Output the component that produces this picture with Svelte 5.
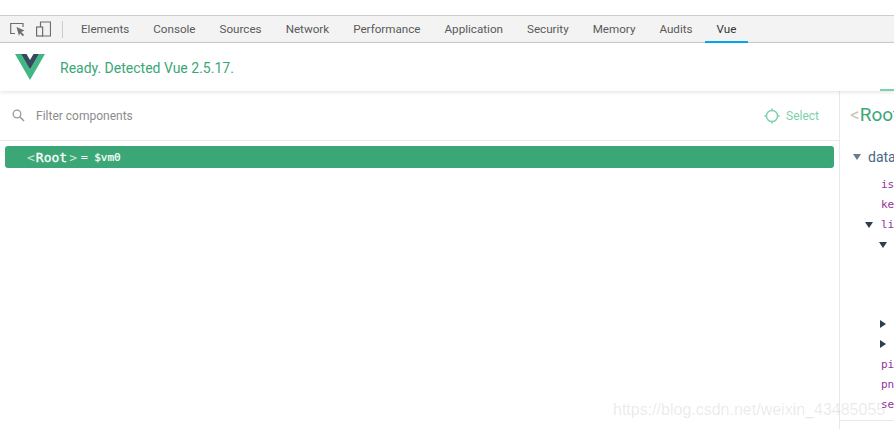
<script>
	const tabs = ['Elements', 'Console', 'Sources', 'Network', 'Performance', 'Application', 'Security', 'Memory', 'Audits', 'Vue'];
	const props = [
		{ name: 'is', indent: 0 },
		{ name: 'ke', indent: 0 },
		{ name: 'li', indent: 0, arrow: 'down' },
		{ name: '', indent: 1, arrow: 'down' },
		{ name: '', indent: 1 },
		{ name: '', indent: 1 },
		{ name: '', indent: 1 },
		{ name: '', indent: 1, arrow: 'right' },
		{ name: '', indent: 1, arrow: 'right' },
		{ name: 'pi', indent: 0 },
		{ name: 'pn', indent: 0 },
		{ name: 'se', indent: 0 }
	];
</script>

<div class="page">
	<div class="devtools-bar">
		<svg class="tool" width="15" height="15" viewBox="0 0 15 15">
			<path d="M13 5V1.500H0.700v10H5" fill="none" stroke="#6e6e6e" stroke-width="1.2" />
			<path d="M6.500 5l8 3.600-3.200 1.300 2.800 3-1.300 1.300-2.800-3-1 2.800z" fill="#6e6e6e" />
		</svg>
		<svg class="tool device" width="15" height="16" viewBox="0 0 15 16">
			<path d="M4.500 6V1h10v14H6" fill="none" stroke="#6e6e6e" stroke-width="1.2" />
			<rect x="0.600" y="6" width="6" height="9" fill="none" stroke="#6e6e6e" stroke-width="1.2" />
		</svg>
		<span class="divider"></span>
		<nav class="tabs">
			{#each tabs as tab}
				<span class="tab" class:active={tab === 'Vue'}>{tab}</span>
			{/each}
		</nav>
	</div>

	<header class="app-header">
		<svg class="logo" width="30" height="26" viewBox="0 0 30 26">
			<path d="M0 0h6l9 15.500L24 0h6L15 26z" fill="#41b883" />
			<path d="M6 0h5.500L15 6l3.500-6H24l-9 15.500z" fill="#34495e" />
		</svg>
		<span class="ready">Ready. Detected Vue 2.5.17.</span>
		<span class="header-tab"></span>
	</header>

	<div class="split">
		<section class="left">
			<div class="filter">
				<svg class="search" width="13" height="13" viewBox="0 0 13 13">
					<circle cx="5" cy="5" r="3.800" fill="none" stroke="#999" stroke-width="1.300" />
					<path d="M8 8l4 4" stroke="#999" stroke-width="1.600" />
				</svg>
				<span class="placeholder">Filter components</span>
				<span class="select">
					<svg width="16" height="16" viewBox="0 0 16 16">
						<circle cx="8" cy="8" r="5.600" fill="none" stroke="#7dd0aa" stroke-width="1.500" />
						<path d="M8 0.500v2.500M8 13v2.500M0.500 8H3M13 8h2.500" stroke="#7dd0aa" stroke-width="1.500" />
					</svg>
					Select
				</span>
			</div>
			<div class="tree">
				<div class="row">
					<span class="bracket">&lt;</span><span class="root">Root</span><span class="bracket">&gt;</span>
					<span class="vm">= $vm0</span>
				</div>
			</div>
		</section>

		<section class="right">
			<div class="inspect-title"><span class="bracket-grey">&lt;</span>Root</div>
			<div class="data-head"><span class="caret"></span>data</div>
			<div class="props">
				{#each props as prop}
					<div class="prop" class:nested={prop.indent === 1}>
						{#if prop.arrow}<span class="arrow {prop.arrow}"></span>{/if}
						<span class="key">{prop.name}</span>
					</div>
				{/each}
			</div>
			<div class="bottom-line"></div>
		</section>
	</div>

	<span class="watermark">https://blog.csdn.net/weixin_43485055</span>
</div>

<style>
	:global(body) {
		margin: 0;
		background: #fff;
	}

	.page {
		position: relative;
		width: 894px;
		height: 429px;
		overflow: hidden;
		padding-top: 15px;
		box-sizing: border-box;
		font-family: Roboto, sans-serif;
	}

	.devtools-bar {
		display: flex;
		align-items: center;
		height: 28px;
		box-sizing: border-box;
		background: #f3f3f3;
		border-top: 1px solid #cdcdcd;
		border-bottom: 1px solid #cdcdcd;
		padding-left: 10px;
	}

	.device {
		margin-left: 11px;
	}

	.divider {
		width: 1px;
		height: 17px;
		background: #ccc;
		margin: 0 6px 0 11px;
	}

	.tabs {
		display: flex;
		height: 100%;
	}

	.tab {
		padding: 0 12px;
		font-size: 11.650px;
		line-height: 27px;
		color: #5a5a5a;
		box-sizing: border-box;
		height: 27px;
	}

	.tab.active {
		color: #333;
		border-bottom: 2px solid #03a9f4;
	}

	.app-header {
		position: relative;
		display: flex;
		align-items: center;
		height: 48px;
		box-sizing: border-box;
		padding: 2px 0 0 15px;
		box-shadow: 0 1px 4px rgba(0, 0, 0, 0.12);
	}

	.logo {
		margin-bottom: 2px;
	}

	.ready {
		margin-left: 15px;
		font-size: 14px;
		color: #3ba776;
	}

	.header-tab {
		position: absolute;
		right: 0;
		bottom: 0;
		width: 14px;
		height: 2px;
		background: #7dd0aa;
	}

	.split {
		display: flex;
		height: 338px;
	}

	.left {
		width: 839px;
		flex: none;
		border-right: 1px solid #e8e8e8;
	}

	.filter {
		display: flex;
		align-items: center;
		height: 50px;
		box-sizing: border-box;
		border-bottom: 1px solid #e8e8e8;
		padding: 0 20px 0 12px;
	}

	.placeholder {
		margin-left: 11px;
		font-size: 12px;
		color: #8c8c8c;
	}

	.select {
		margin-left: auto;
		display: flex;
		align-items: center;
		gap: 6px;
		font-size: 12px;
		color: #7dd0aa;
	}

	.tree {
		padding: 5px 5px 0;
	}

	.row {
		display: flex;
		align-items: center;
		height: 22px;
		padding-left: 22px;
		border-radius: 3px;
		background: #3ba776;
		color: #fff;
		font-family: "DejaVu Sans Mono", monospace;
		white-space: pre;
	}

	.bracket {
		font-size: 13px;
		color: #c4e4d5;
	}

	.root {
		margin: 0 2px 0 1px;
		font-size: 13px;
		font-weight: 500;
		-webkit-text-stroke: 0.3px #fff;
	}

	.vm {
		margin-left: 4px;
		font-size: 11px;
		-webkit-text-stroke: 0.2px #fff;
	}

	.right {
		position: relative;
		flex: 1;
		min-width: 0;
		overflow: hidden;
		white-space: nowrap;
	}

	.inspect-title {
		height: 49px;
		padding-left: 10px;
		font-size: 19px;
		line-height: 48px;
		color: #3ba776;
	}

	.bracket-grey {
		color: #c5c5c5;
	}

	.data-head {
		display: flex;
		align-items: center;
		height: 34px;
		padding-left: 13px;
		font-size: 14px;
		color: #486887;
	}

	.caret {
		width: 0;
		height: 0;
		margin-right: 7px;
		border-left: 4px solid transparent;
		border-right: 4px solid transparent;
		border-top: 6px solid #6a7a8c;
	}

	.props {
		padding-top: 1px;
	}

	.prop {
		position: relative;
		height: 20px;
		padding-left: 41px;
		font-family: "DejaVu Sans Mono", monospace;
		font-size: 11px;
		line-height: 20px;
		color: #97319d;
	}

	.prop.nested {
		padding-left: 55px;
	}

	.arrow {
		position: absolute;
		width: 0;
		height: 0;
	}

	.arrow.down {
		left: 25px;
		top: 7px;
		border-left: 4px solid transparent;
		border-right: 4px solid transparent;
		border-top: 6px solid #2c3e50;
	}

	.nested .arrow.down {
		left: 39px;
	}

	.arrow.right {
		left: 40px;
		top: 5px;
		border-top: 4px solid transparent;
		border-bottom: 4px solid transparent;
		border-left: 6px solid #2c3e50;
	}

	.bottom-line {
		position: absolute;
		left: 0;
		right: 0;
		top: 329px;
		height: 1px;
		background: #e8e8e8;
	}

	.watermark {
		position: absolute;
		left: 613px;
		top: 401px;
		font-family: "Liberation Sans", Arial, sans-serif;
		font-size: 16px;
		color: rgba(120, 120, 120, 0.16);
		white-space: nowrap;
	}
</style>
